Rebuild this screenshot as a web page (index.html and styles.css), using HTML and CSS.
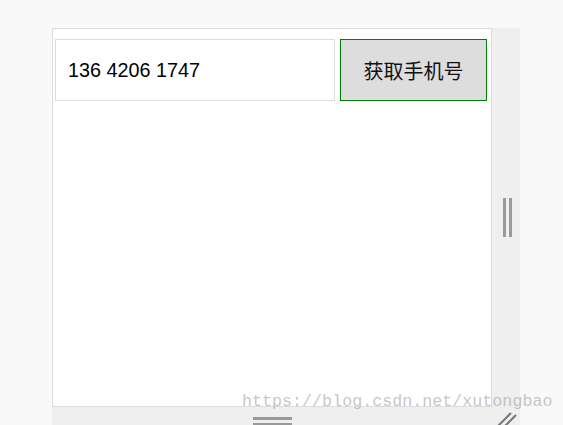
FILE: index.html
```html
<!DOCTYPE html>
<html lang="zh-CN">
<head>
  <meta charset="UTF-8">
  <title>获取手机号</title>
  <link rel="stylesheet" href="styles.css">
</head>
<body>
<div class="frame">
  <div class="panel">
    <div class="phone-row">
      <div class="phone-input">136 4206 1747</div>
      <button class="get-phone">获取手机号</button>
    </div>
  </div>
  <div class="side-strip">
    <span class="grip-v"></span>
    <span class="grip-v"></span>
  </div>
  <div class="bottom-strip">
    <div class="grip-h">
      <span></span>
      <span></span>
    </div>
  </div>
  <div class="corner">
    <svg width="28" height="19" viewBox="0 0 28 19">
      <line x1="6" y1="19" x2="19" y2="6" stroke="#777" stroke-width="2"/>
      <line x1="13" y1="19" x2="24" y2="8" stroke="#777" stroke-width="2"/>
    </svg>
  </div>
</div>
<div class="watermark">https://blog.csdn.net/xutongbao</div>
</body>
</html>
```

FILE: styles.css
```css
body {
  margin: 0;
  background: #f9f9f9;
  font-family: Arial, "Liberation Sans", "Noto Sans CJK SC", sans-serif;
  height: 425px;
  overflow: hidden;
}
.frame {
  display: grid;
  grid-template-columns: 440px 28px;
  grid-template-rows: 379px 19px;
  margin: 28px 0 0 52px;
}
.panel {
  background: #fff;
  border: 1px solid #dcdcdc;
  padding: 10px 4px 0 2px;
}
.phone-row {
  display: flex;
  gap: 5px;
}
.phone-input {
  box-sizing: border-box;
  width: 280px;
  height: 62px;
  border: 1px solid #dddddd;
  padding-left: 12px;
  display: flex;
  align-items: center;
  font-size: 19.8px;
  color: #000;
}
.get-phone {
  box-sizing: border-box;
  width: 147px;
  height: 62px;
  background: #dddddd;
  border: 1px solid #008000;
  font-family: "Noto Sans CJK SC", sans-serif;
  font-size: 20px;
  color: #111;
  padding: 0;
}
.side-strip {
  background: #efefef;
  display: flex;
  justify-content: center;
  align-items: center;
  gap: 3px;
  padding-left: 3px;
}
.grip-v {
  width: 3px;
  height: 39px;
  background: #9a9a9a;
}
.bottom-strip {
  background: #efefef;
  display: flex;
  justify-content: center;
  padding-top: 10px;
}
.grip-h {
  display: flex;
  flex-direction: column;
  gap: 3px;
}
.grip-h span {
  width: 39px;
  height: 3px;
  background: #9a9a9a;
}
.corner {
  background: #efefef;
}
.corner svg {
  display: block;
}
.watermark {
  position: absolute;
  left: 242px;
  top: 392px;
  font-family: "Liberation Mono", monospace;
  font-size: 16.7px;
  color: rgba(160, 160, 160, 0.6);
  white-space: nowrap;
}
```
